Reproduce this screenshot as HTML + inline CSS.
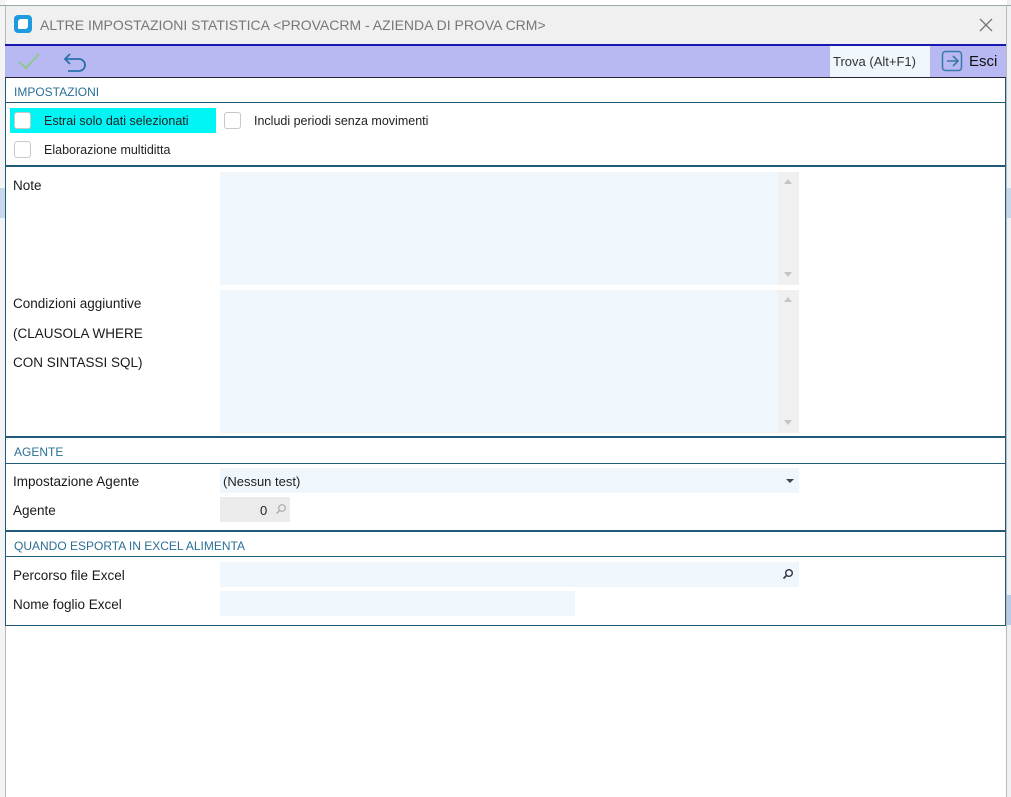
<!DOCTYPE html>
<html><head><meta charset="utf-8"><style>
*{box-sizing:border-box;margin:0;padding:0}
body{width:1011px;height:797px;overflow:hidden;background:#fff;font-family:"Liberation Sans",sans-serif;font-size:13px;color:#222;position:relative}
.abs{position:absolute}
.lbl{position:absolute;left:13px;font-size:13.5px;color:#1a1a1a}
.hline{position:absolute;left:5px;width:1001px;background:#1f5a78}
.sec{position:absolute;left:14px;font-size:12px;color:#2a6f96}
.fld{position:absolute;background:#eff7fd}
.cb{position:absolute;width:17px;height:17px;border:1px solid #c8c8c8;border-radius:3px;background:#fff}
</style></head><body>
<div class="abs" style="left:0;top:0;width:5px;height:797px;background:#f4f4f4"></div>
<div class="abs" style="left:1007px;top:0;width:4px;height:797px;background:#eef0f2"></div>
<div class="abs" style="left:0;top:5px;width:1011px;height:1px;background:#9aa"></div>
<div class="abs" style="left:0;top:188px;width:5px;height:30px;background:#c8d8ea"></div>
<div class="abs" style="left:1007px;top:188px;width:4px;height:30px;background:#c8d8ea"></div>
<div class="abs" style="left:1007px;top:595px;width:4px;height:30px;background:#b8cce6"></div>
<div class="abs" style="left:5px;top:6px;width:1002px;height:791px;background:#fff;border-left:1px solid #bbb;border-right:1px solid #bbb"></div>
<div class="abs" style="left:6px;top:6px;width:1000px;height:38px;background:#f0f0f0"></div>
<div class="abs" style="left:14px;top:15px;width:18px;height:18px;background:#1e9be0;border-radius:4px"><div style="position:absolute;left:4px;top:4px;width:10px;height:10px;background:#fff;border-radius:3px 1px 3px 1px"></div></div>
<div class="abs" style="left:40px;top:17px;font-size:14px;color:#777">ALTRE IMPOSTAZIONI STATISTICA &lt;PROVACRM - AZIENDA DI PROVA CRM&gt;</div>
<svg class="abs" style="left:979px;top:18px" width="14" height="14"><path d="M1 1L13 13M13 1L1 13" stroke="#777" stroke-width="1.3"/></svg>
<div class="abs" style="left:5px;top:44px;width:1001px;height:34px;background:#b8b8f2;border-top:2px solid #1818b0;border-bottom:1px solid #223"></div>
<svg class="abs" style="left:17px;top:51px" width="24" height="20"><path d="M2 11L9 17L22 3" stroke="#8cc98c" stroke-width="2" fill="none"/></svg>
<svg class="abs" style="left:62px;top:51px" width="26" height="22"><path d="M8 3L3 8L8 13M3 8H17A6 6 0 0 1 17 20H6" stroke="#2a6fa8" stroke-width="1.8" fill="none"/></svg>
<div class="abs" style="left:830px;top:46px;width:100px;height:31px;background:#eff7fd;font-size:13px;color:#333;padding:8px 0 0 3px">Trova (Alt+F1)</div>
<svg class="abs" style="left:941px;top:50px" width="24" height="22"><rect x="1.5" y="1.5" width="19" height="19" rx="3" fill="none" stroke="#3a78a8" stroke-width="1.5"/><path d="M6 11H17M12 6L17 11L12 16" stroke="#3a78a8" stroke-width="1.6" fill="none"/></svg>
<div class="abs" style="left:969px;top:53px;font-size:15px;color:#111">Esci</div>
<div class="sec" style="top:85px">IMPOSTAZIONI</div>
<div class="hline" style="top:102px;height:1px"></div>
<div class="abs" style="left:10px;top:108px;width:206px;height:25px;background:#00f5f5"></div>
<div class="cb" style="left:14px;top:112px"></div>
<div class="abs" style="left:44px;top:114px;font-size:12.5px">Estrai solo dati selezionati</div>
<div class="cb" style="left:224px;top:112px"></div>
<div class="abs" style="left:254px;top:114px;font-size:12.5px">Includi periodi senza movimenti</div>
<div class="cb" style="left:14px;top:141px"></div>
<div class="abs" style="left:44px;top:143px;font-size:12.5px">Elaborazione multiditta</div>
<div class="hline" style="top:165px;height:2px"></div>
<div class="lbl" style="top:178px">Note</div>
<div class="fld" style="left:220px;top:172px;width:558px;height:113px"></div>
<div class="abs" style="left:778px;top:172px;width:21px;height:113px;background:#f0f0f0"></div>
<div class="abs" style="left:784px;top:179px;border:4px solid transparent;border-bottom:5px solid #c4c4cc;border-top:0"></div>
<div class="abs" style="left:784px;top:272px;border:4px solid transparent;border-top:5px solid #c4c4cc;border-bottom:0"></div>
<div class="lbl" style="top:296px">Condizioni aggiuntive</div>
<div class="lbl" style="top:326px">(CLAUSOLA WHERE</div>
<div class="lbl" style="top:355px">CON SINTASSI SQL)</div>
<div class="fld" style="left:220px;top:290px;width:558px;height:143px"></div>
<div class="abs" style="left:778px;top:290px;width:21px;height:143px;background:#f0f0f0"></div>
<div class="abs" style="left:784px;top:297px;border:4px solid transparent;border-bottom:5px solid #c4c4cc;border-top:0"></div>
<div class="abs" style="left:784px;top:420px;border:4px solid transparent;border-top:5px solid #c4c4cc;border-bottom:0"></div>
<div class="hline" style="top:436px;height:2px"></div>
<div class="sec" style="top:445px">AGENTE</div>
<div class="hline" style="top:463px;height:1px"></div>
<div class="lbl" style="top:474px">Impostazione Agente</div>
<div class="fld" style="left:220px;top:468px;width:579px;height:25px;padding:6px 0 0 3px;font-size:13px">(Nessun test)</div>
<div class="abs" style="left:786px;top:479px;border:4px solid transparent;border-top:4px solid #445;border-bottom:0"></div>
<div class="lbl" style="top:503px">Agente</div>
<div class="abs" style="left:220px;top:497px;width:70px;height:25px;background:#ebebeb;font-size:13px;padding:6px 0 0 40px">0</div>
<svg class="abs" style="left:275px;top:503px" width="12" height="12"><circle cx="7" cy="5" r="3.3" fill="none" stroke="#aaa" stroke-width="1.2"/><path d="M5 7L1.5 10.5" stroke="#aaa" stroke-width="1.3"/></svg>
<div class="hline" style="top:530px;height:2px"></div>
<div class="sec" style="top:539px">QUANDO ESPORTA IN EXCEL ALIMENTA</div>
<div class="hline" style="top:556px;height:1px"></div>
<div class="lbl" style="top:568px">Percorso file Excel</div>
<div class="fld" style="left:220px;top:562px;width:579px;height:25px"></div>
<svg class="abs" style="left:782px;top:568px" width="12" height="12"><circle cx="7" cy="5" r="3.3" fill="none" stroke="#334" stroke-width="1.4"/><path d="M5 7L1.5 10.5" stroke="#334" stroke-width="1.6"/></svg>
<div class="lbl" style="top:597px">Nome foglio Excel</div>
<div class="fld" style="left:220px;top:591px;width:355px;height:25px"></div>
<div class="hline" style="top:625px;height:1px"></div>
<div class="abs" style="left:5px;top:78px;width:1px;height:548px;background:#1f5a78"></div>
<div class="abs" style="left:1005px;top:78px;width:1px;height:548px;background:#1f5a78"></div>
</body></html>
